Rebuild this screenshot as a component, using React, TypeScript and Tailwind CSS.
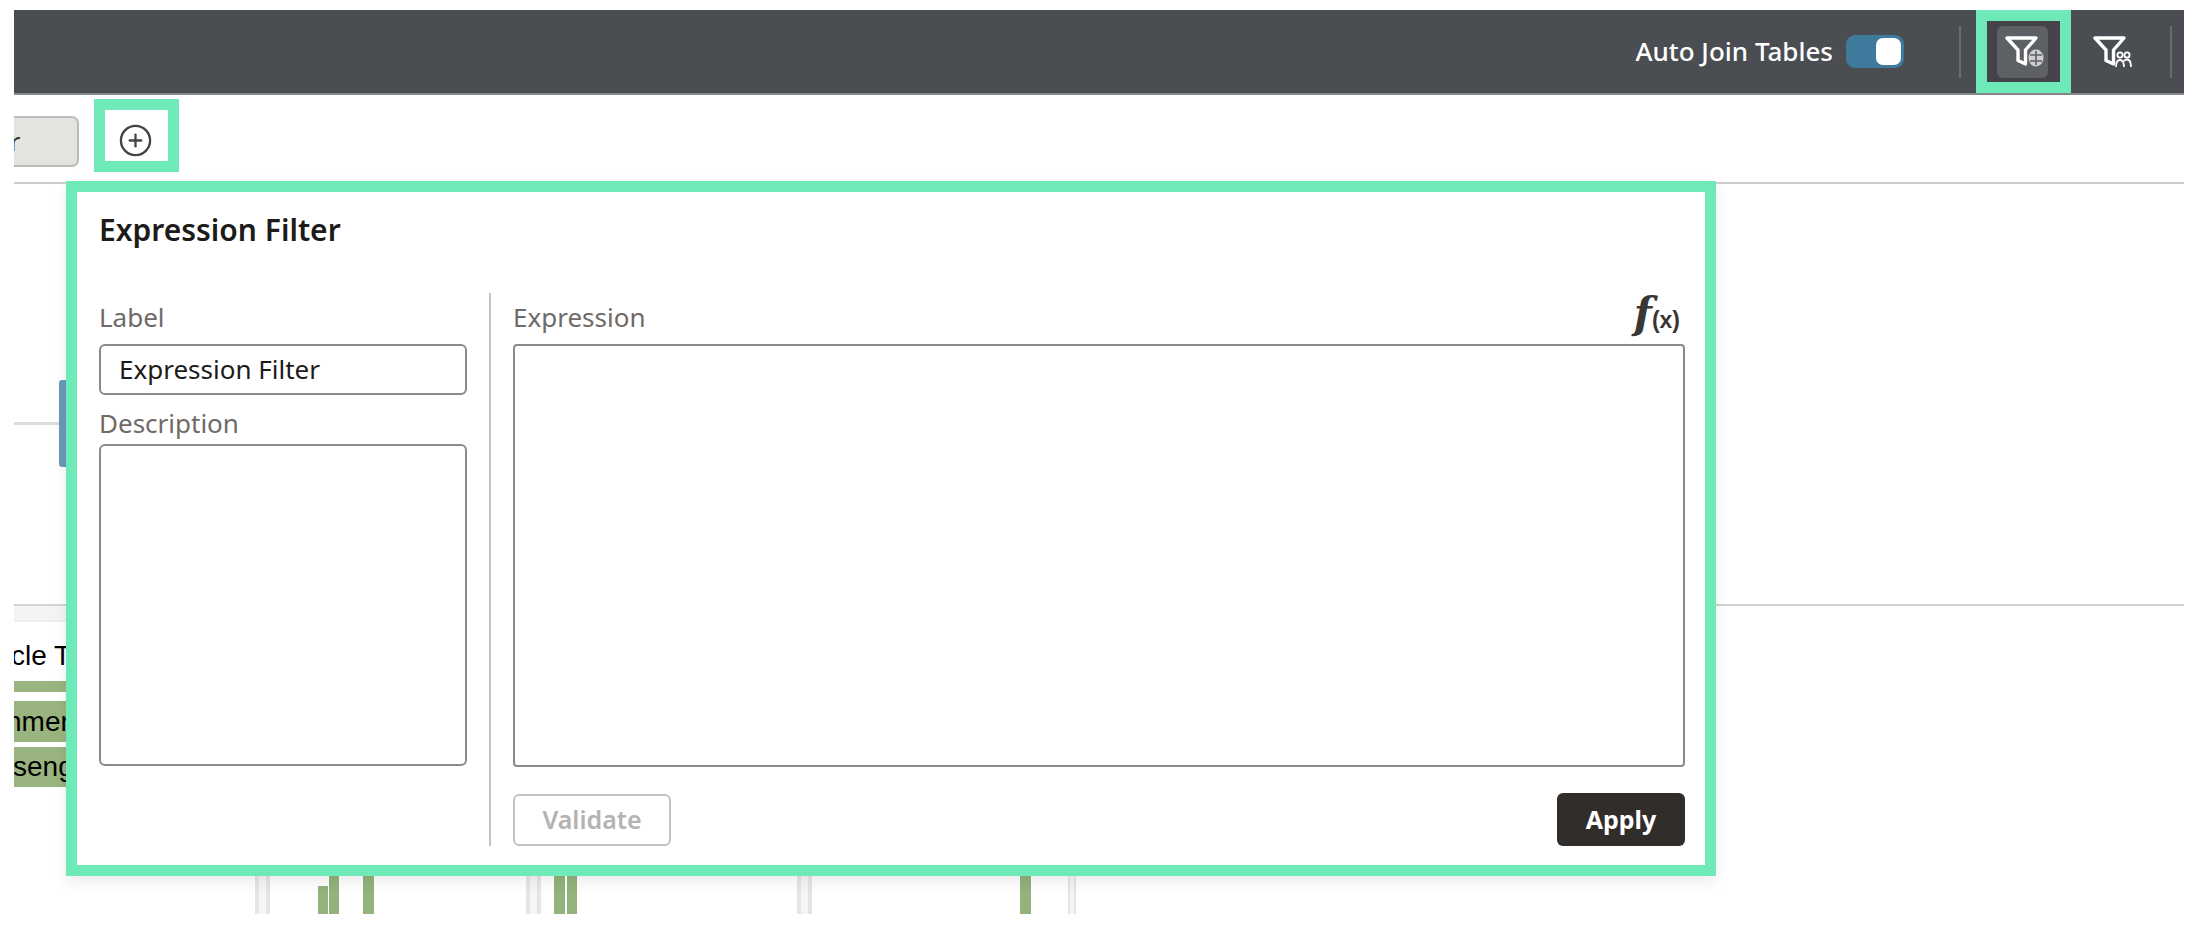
import { CirclePlus } from "lucide-react";

const FONT = "font-['Noto_Sans','Lato',sans-serif]";

const FilterIcon = ({ kind }: { kind: "data" | "user" }) => (
  <svg width="40" height="32" viewBox="0 0 40 32" fill="none">
    <path d="M2 2h29L20.500 14v14l-7.500-3.500V14Z" stroke="#fff" strokeWidth="3.4" strokeLinejoin="round" />
    {kind === "data" ? (
      <>
        <ellipse cx="31" cy="22" rx="7.500" ry="8.500" fill="#cfcfcf" />
        <path d="M25 19h12M25 25h12M31 15v14" stroke="#5d6065" strokeWidth="1.6" />
      </>
    ) : (
      <>
        <circle cx="27" cy="19" r="2.600" stroke="#fff" strokeWidth="1.8" />
        <circle cx="34" cy="19" r="2.600" stroke="#fff" strokeWidth="1.8" />
        <path d="M23 31c0-5 2-7 4-7s4 2 4 7M31 25c1-1 2-1.500 3-1.500 2 0 4 2 4 7.500" stroke="#fff" strokeWidth="1.8" />
      </>
    )}
  </svg>
);

const App = () => {
  return (
    <div className={`relative h-[926px] w-[2196px] overflow-hidden bg-white pt-[10px] pl-[14px] pr-[12px] ${FONT}`}>
      {/* Top bar */}
      <header className="flex h-[85px] items-center justify-end border-b-2 border-[#85878a] bg-[#4a4d51]">
        <span className="text-[26px] font-medium text-white">Auto Join Tables</span>
        <div className="ml-[13px] flex h-[33px] w-[58px] items-center justify-end rounded-[9px] bg-[#3f7a9c] pr-[3px]">
          <div className="h-[27px] w-[25px] rounded-[7px] bg-white" />
        </div>
        <div className="ml-[55px] h-[52px] w-[2px] bg-[#6b6e71]" />
        <div className="ml-[15px] flex h-[83px] w-[95px] items-center justify-center border-[11px] border-[#6eeab9] bg-[#45424a] pr-[3px]">
          <div className="flex h-[52px] w-[51px] items-center justify-center rounded-[6px] bg-[#5d6065] pl-[6px]">
            <FilterIcon kind="data" />
          </div>
        </div>
        <div className="ml-[22px] flex w-[40px] items-center justify-center">
          <FilterIcon kind="user" />
        </div>
        <div className="ml-[37px] h-[52px] w-[2px] bg-[#6b6e71]" />
        <div className="w-[12px]" />
      </header>

      {/* Tab row */}
      <div className="flex items-start pt-[4px]">
        <div className="mt-[17px] flex h-[51px] w-[65px] items-center overflow-hidden rounded-r-[7px] border-y-2 border-r-2 border-[#bdbbb7] bg-[#e4e3df] text-[25px] text-[#2b2b2b]">
          <span className="-ml-[4px]">r</span>
        </div>
        <div className="ml-[15px] flex h-[73px] w-[85px] items-center justify-center border-[11px] border-[#6eeab9] pt-[10px] pr-[3px]">
          <CirclePlus size={35} strokeWidth={1.6} className="text-[#47433f]" />
        </div>
      </div>

      {/* Sheet behind the dialog */}
      <div className="mt-[10px] h-[2px] bg-[#cfcdc9]" />
      <div className="h-[420px] pt-[196px]">
        <div className="flex h-[87px] items-center">
          <div className="h-[3px] w-[45px] bg-[#dcdcdc]" />
          <div className="h-[87px] w-[7px] rounded-l-[3px] bg-[#6a9ab8]" />
        </div>
      </div>
      <div className="h-[2px] bg-[#d3d2cf]" />
      <div className="w-[52px] overflow-hidden">
        <div className="h-[16px] border-b-2 border-[#eeedeb] bg-[#f5f4f3]" />
        <div className="flex h-[59px] items-center whitespace-nowrap pt-[8px] font-['Liberation_Sans',sans-serif] text-[28px] text-black">
          <span className="-ml-[3px]">cle Ty</span>
        </div>
        <div className="h-[11px] bg-[#9ab47f]" />
        <div className="mt-[9px] flex h-[41px] items-center whitespace-nowrap bg-[#9ab47f] font-['Liberation_Sans',sans-serif] text-[28px] text-black">
          <span className="-ml-[8px]">nmer</span>
        </div>
        <div className="mt-[5px] flex h-[40px] items-center whitespace-nowrap bg-[#9ab47f] font-['Liberation_Sans',sans-serif] text-[28px] text-black">
          <span className="-ml-[1px]">seng</span>
        </div>
      </div>

      {/* Chart stubs under the dialog */}
      <div className="mt-[83px] flex h-[44px] items-end">
        <div className="ml-[241px] h-[44px] w-[15px] border-x-[4px] border-[#e6e5e3] bg-[#f6f5f4]" />
        <div className="ml-[48px] h-[28px] w-[10px] bg-[#93b27c]" />
        <div className="ml-px h-[44px] w-[10px] bg-[#93b27c]" />
        <div className="ml-[24px] h-[44px] w-[11px] bg-[#93b27c]" />
        <div className="ml-[152px] h-[44px] w-[15px] border-x-[4px] border-[#e6e5e3] bg-[#f6f5f4]" />
        <div className="ml-[13px] h-[44px] w-[11px] bg-[#93b27c]" />
        <div className="ml-[2px] h-[44px] w-[10px] bg-[#93b27c]" />
        <div className="ml-[220px] h-[44px] w-[15px] border-x-[4px] border-[#e6e5e3] bg-[#f6f5f4]" />
        <div className="ml-[208px] h-[44px] w-[11px] bg-[#93b27c]" />
        <div className="ml-[37px] h-[44px] w-[8px] border-x-[2px] border-[#e6e5e3] bg-[#f6f5f4]" />
      </div>

      {/* Dialog */}
      <section className="absolute left-[66px] top-[181px] flex h-[695px] w-[1650px] flex-col border-[11px] border-[#6eeab9] bg-white pl-[22px] pr-[20px] shadow-[0_6px_14px_rgba(0,0,0,0.08)]">
        <h2 className="mt-[20px] text-[30px] font-semibold leading-[36px] text-[#1d1b1a]">Expression Filter</h2>
        <div className="mt-[45px] flex">
          <div className="flex w-[368px] flex-col pt-[9px]">
            <label className="text-[26px] leading-[30px] text-[#6f6a66]">Label</label>
            <div className="mt-[12px] flex h-[51px] items-center rounded-[6px] border-2 border-[#8c8a88] pl-[18px] text-[26px] text-[#1d1b1a]">
              Expression Filter
            </div>
            <label className="mt-[13px] text-[26px] leading-[30px] text-[#6f6a66]">Description</label>
            <div className="mt-[6px] h-[322px] rounded-[6px] border-2 border-[#8c8a88]" />
          </div>
          <div className="ml-[22px] mr-[22px] w-[2px] bg-[#c4c3c1]" />
          <div className="flex flex-1 flex-col pt-[9px]">
            <div className="flex h-[30px] items-center justify-between">
              <label className="text-[26px] leading-[30px] text-[#6f6a66]">Expression</label>
              <span className="pr-[5px] font-['DejaVu_Serif',serif] text-[42px] font-bold italic leading-[30px] text-[#3a3633]">
                f<span className="font-['Liberation_Sans',sans-serif] text-[23px] not-italic">(x)</span>
              </span>
            </div>
            <div className="mt-[12px] h-[423px] rounded-[4px] border-2 border-[#8c8a88]" />
            <div className="mt-[26px] flex items-center justify-between">
              <button className="h-[52px] w-[158px] rounded-[6px] border-2 border-[#c4c3c1] text-[25px] font-semibold text-[#b5b3b1]">
                Validate
              </button>
              <button className="h-[53px] w-[128px] rounded-[6px] bg-[#312d2a] text-[25px] font-bold text-white">
                Apply
              </button>
            </div>
          </div>
        </div>
      </section>
    </div>
  );
};

export default App;
